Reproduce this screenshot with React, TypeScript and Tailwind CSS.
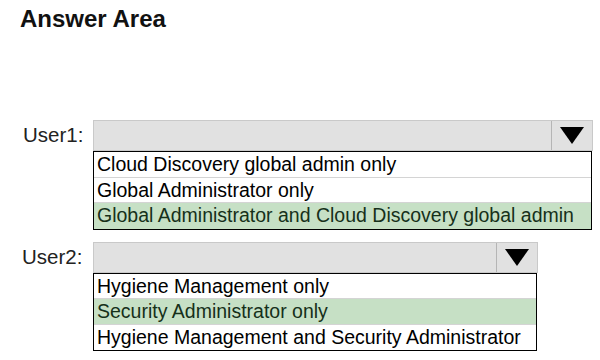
import React from "react";

type Option = { label: string; selected?: boolean };

const user1: Option[] = [
  { label: "Cloud Discovery global admin only" },
  { label: "Global Administrator only" },
  { label: "Global Administrator and Cloud Discovery global admin", selected: true },
];

const user2: Option[] = [
  { label: "Hygiene Management only" },
  { label: "Security Administrator only", selected: true },
  { label: "Hygiene Management and Security Administrator" },
];

function Dropdown({ options, width }: { options: Option[]; width: string }) {
  return (
    <div className={width}>
      {/* Closed select bar */}
      <div className="flex h-[31px] bg-[#e1e1e1] border border-[#c9c9c9]">
        <div className="flex-1" />
        <div className="w-[41px] border-l border-[#b5b5b5] flex items-center justify-center">
          <svg width="26" height="19" viewBox="0 0 26 19">
            <polygon points="1,1 25,1 13,18" fill="#000" />
          </svg>
        </div>
      </div>
      {/* Options list */}
      <div className="border border-black mr-[1px]">
        {options.map((o, i) => (
          <div
            key={o.label}
            className={
              "h-[25.5px] pl-[3px] text-[19.5px] leading-[25px] whitespace-nowrap " +
              (o.selected ? "bg-[#c6e0c5] text-[#16301a] " : "bg-white text-black ") +
              (i < options.length - 1 ? "border-b border-[#d4d4d4]" : "")
            }
          >
            {o.label}
          </div>
        ))}
      </div>
    </div>
  );
}

export default function App() {
  return (
    <div
      className="w-[600px] h-[360px] bg-white text-black overflow-hidden"
      style={{ fontFamily: '"Liberation Sans", Arial, sans-serif' }}
    >
      <h1 className="pl-[20px] pt-[5px] text-[24px] font-bold leading-[28px] text-[#111]">
        Answer Area
      </h1>

      <div className="mt-[87px] flex flex-col gap-[12px]">
        <div className="flex items-start">
          <div className="w-[93px] pl-[23px] h-[31px] flex items-center text-[20.5px] text-[#222]">User1:</div>
          <Dropdown options={user1} width="w-[500px]" />
        </div>
        <div className="flex items-start">
          <div className="w-[93px] pl-[22px] h-[31px] flex items-center text-[20.5px] text-[#222]">User2:</div>
          <Dropdown options={user2} width="w-[445px]" />
        </div>
      </div>
    </div>
  );
}
